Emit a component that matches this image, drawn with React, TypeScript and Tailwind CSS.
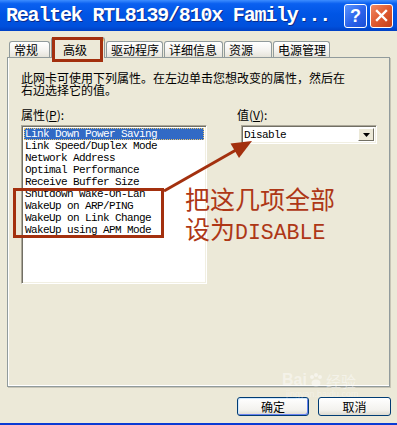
import React from "react";

const items = [
  "Link Down Power Saving",
  "Link Speed/Duplex Mode",
  "Network Address",
  "Optimal Performance",
  "Receive Buffer Size",
  "Shutdown Wake-On-Lan",
  "WakeUp on ARP/PING",
  "WakeUp on Link Change",
  "WakeUp using APM Mode",
];

function Tab({ label, w }: { label: string; w: string }) {
  return (
    <div
      className={`${w} h-[16px] mr-[1px] shrink-0 border border-b-0 border-[#919B9C] rounded-t-[3px] bg-[linear-gradient(to_bottom,#ffffff,#f3f2ee_60%,#e6e4da)] pl-[4px] text-[12px] leading-[15px] text-black`}
    >
      {label}
    </div>
  );
}

export default function App() {
  return (
    <div className="relative w-[397px] h-[425px] overflow-hidden bg-[#ECE9D8] flex flex-col font-['Noto_Sans_CJK_SC',sans-serif]">
      {/* Title bar */}
      <div className="h-[31px] shrink-0 flex items-center pl-[6px] pr-[4px] bg-[linear-gradient(to_bottom,#3d8dff_0%,#0a60f0_12%,#0055e5_45%,#0050dc_85%,#0040c4_100%)]">
        <span className="font-['Liberation_Mono',monospace] font-bold text-[20px] tracking-[-1.2px] text-white leading-none [text-shadow:1px_1px_0_#0a2a8a] whitespace-nowrap">
          Realtek RTL8139/810x Family...
        </span>
        <div className="ml-auto flex gap-[3px]">
          <div className="w-[23px] h-[24px] rounded-[3px] border border-white bg-[linear-gradient(135deg,#5a95ff,#2a62ea_55%,#1b4fd6)] flex items-center justify-center text-white font-bold text-[18px] leading-none font-['Liberation_Sans',sans-serif]">
            ?
          </div>
          <div className="w-[23px] h-[24px] rounded-[3px] border border-white bg-[linear-gradient(135deg,#f08a66,#df5a30_50%,#c3401a)] flex items-center justify-center">
            <svg width="13" height="13" viewBox="0 0 13 13">
              <path d="M2 2 L11 11 M11 2 L2 11" stroke="#fff" strokeWidth="2.4" strokeLinecap="square" />
            </svg>
          </div>
        </div>
      </div>

      {/* Tabs */}
      <div className="h-[26px] shrink-0 flex items-end pl-[9px] relative z-10">
        <Tab label="常规" w="w-[41px]" />
        <div className="w-[54px] h-[21px] -mb-px mr-[1px] shrink-0 border border-b-0 border-[#919B9C] rounded-t-[3px] bg-[#ECE9D8] shadow-[inset_0_2px_0_#f4b945] pl-[11px] pt-[4px] text-[12px] leading-[15px] text-black">
          高级
        </div>
        <Tab label="驱动程序" w="w-[57px]" />
        <Tab label="详细信息" w="w-[59px]" />
        <Tab label="资源" w="w-[48px]" />
        <Tab label="电源管理" w="w-[57px]" />
      </div>

      {/* Panel */}
      <div className="ml-[7px] w-[383px] h-[330px] shrink-0 border border-[#919B9C] shadow-[inset_1px_0_0_#fff,inset_0_-1px_0_#fff,1px_1px_0_#c8c5b6] pl-[13px] pt-[14px] pr-[10px]">
        <div className="text-[12px] leading-[12px] text-black">
          <div>此网卡可使用下列属性。在左边单击您想改变的属性，然后在</div>
          <div>右边选择它的值。</div>
        </div>
        <div className="flex mt-[13px]">
          <div className="w-[186px] shrink-0">
            <div className="text-[12px] leading-[12px] text-black">
              属性(<span className="underline">P</span>):
            </div>
            <div className="mt-[4px] h-[159px] bg-white border border-t-[#ACA899] border-l-[#ACA899] border-b-white border-r-white shadow-[inset_1px_1px_0_#716F64,inset_-1px_-1px_0_#F1EFE2] pt-[2px] pl-[2px] pr-[2px]">
              {items.map((it, i) => (
                <div
                  key={it}
                  className={`h-[12px] pl-[1px] font-['Liberation_Mono',monospace] text-[11px] tracking-[-0.6px] leading-[12px] whitespace-nowrap ${
                    i === 0 ? "bg-[#316AC5] text-white outline-1 outline-dotted outline-[#e9c46a] -outline-offset-1" : "text-black"
                  }`}
                >
                  {it}
                </div>
              ))}
            </div>
          </div>
          <div className="ml-[30px] flex-1">
            <div className="text-[12px] leading-[12px] text-black">
              值(<span className="underline">V</span>):
            </div>
            <div className="mt-[4px] ml-[4px] w-[136px] h-[19px] bg-white border border-t-[#ACA899] border-l-[#ACA899] border-b-white border-r-white shadow-[inset_1px_1px_0_#716F64,inset_-1px_-1px_0_#F1EFE2] flex items-center pl-[2px] pr-[2px]">
              <span className="font-['Liberation_Mono',monospace] text-[11px] tracking-[-0.6px] leading-[12px] text-black">
                Disable
              </span>
              <div className="ml-auto w-[16px] h-[13px] bg-[#ECE9D8] border border-t-white border-l-white border-b-[#716F64] border-r-[#716F64] flex items-center justify-center">
                <svg width="7" height="4" viewBox="0 0 7 4">
                  <path d="M0 0 H7 L3.5 4 Z" fill="#000" />
                </svg>
              </div>
            </div>
          </div>
        </div>
      </div>

      {/* Buttons */}
      <div className="mt-[10px] flex justify-end gap-[9px] pr-[6px]">
        <div className="w-[72px] h-[19px] rounded-[3px] border border-[#003C74] bg-[linear-gradient(to_bottom,#ffffff,#f3f2ee_70%,#dcdad0)] shadow-[inset_1px_1px_0_#cee7ff,inset_-1px_-1px_0_#6982ee] flex items-center justify-center text-[12px] leading-none text-black">
          确定
        </div>
        <div className="w-[73px] h-[19px] rounded-[3px] border border-[#003C74] bg-[linear-gradient(to_bottom,#ffffff,#f3f2ee_70%,#dcdad0)] flex items-center justify-center text-[12px] leading-none text-black">
          取消
        </div>
      </div>

      <div className="mt-auto h-[2px] bg-[#0a3bd4]" />

      {/* Baidu watermark */}
      <div className="absolute left-[282px] top-[372px] pointer-events-none text-white/45 leading-none">
        <div className="flex items-end font-['Liberation_Sans',sans-serif] font-bold text-[16px]">
          Bai
          <svg width="16" height="16" viewBox="0 0 16 16" className="mx-[1px]">
            <g fill="rgba(255,255,255,0.5)">
              <circle cx="4" cy="5" r="2" />
              <circle cx="8" cy="3" r="2" />
              <circle cx="12" cy="5" r="2" />
              <ellipse cx="8" cy="11" rx="4.5" ry="3.5" />
            </g>
          </svg>
          <span className="font-['Noto_Sans_CJK_SC'] font-normal text-[15px] ml-[1px]">经验</span>
        </div>
        <div className="text-[9px] font-['Liberation_Sans',sans-serif] mt-[2px] ml-[4px] text-white/35">jingyan.baidu.com</div>
      </div>

      {/* Annotations */}
      <div className="absolute left-[52px] top-[37px] w-[51px] h-[25px] border-[3px] border-[#A3300E] z-20 pointer-events-none" />
      <div className="absolute left-[13px] top-[188px] w-[151px] h-[50px] border-[3px] border-[#A3300E] z-20 pointer-events-none" />
      <svg className="absolute left-0 top-0 z-20 pointer-events-none" width="397" height="425">
        <line x1="164" y1="191" x2="236" y2="150" stroke="#A3300E" strokeWidth="3" />
        <polygon points="252,141 230.5,143.5 239,158" fill="#A3300E" />
      </svg>
      <div className="absolute left-[185px] top-[184px] z-20 text-[#AE3716] pointer-events-none">
        <div className="h-[30px] text-[25px] leading-[28px] font-['Noto_Sans_CJK_SC']">把这几项全部</div>
        <div className="h-[28px] text-[25px] leading-[28px] font-['Noto_Sans_CJK_SC'] whitespace-nowrap">
          设为<span className="font-['Liberation_Mono',monospace] text-[21.5px]">DISABLE</span>
        </div>
      </div>
    </div>
  );
}
